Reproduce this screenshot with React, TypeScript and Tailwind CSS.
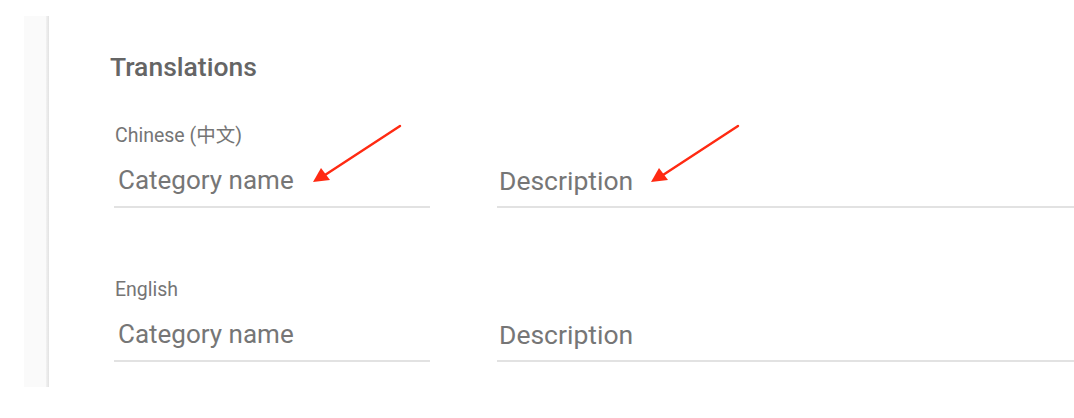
import React from "react";

function Arrow({ className }: { className: string }) {
  return (
    <svg className={className} width="92" height="62" viewBox="0 0 92 62" fill="none">
      <line x1="89" y1="2" x2="14" y2="51" stroke="#ff2a12" strokeWidth="2.4" strokeLinecap="round" />
      <polygon points="2,58 10,44 19,56" fill="#ff2a12" />
    </svg>
  );
}

function Field({
  label,
  placeholder,
  className,
  desc,
}: {
  label?: string;
  placeholder: string;
  className: string;
  desc?: boolean;
}) {
  return (
    <div className={className}>
      <div className="h-[24px] pl-[1px] text-[19.5px] leading-[24px] text-[#757575]">{label}</div>
      <div
        className={
          desc
            ? "mt-[16px] border-b-2 border-[#e2e2e2] pb-[8px] pl-[2px] text-[26.5px] leading-[34px] text-[#767676]"
            : "mt-[15px] border-b-2 border-[#e2e2e2] pb-[9px] pl-[4px] text-[26px] leading-[34px] text-[#767676]"
        }
      >
        {placeholder}
      </div>
    </div>
  );
}

export default function App() {
  return (
    <div
      className="w-[1074px] h-[418px] bg-white pt-[16px] pl-[24px]"
      style={{ fontFamily: "Roboto, 'Noto Sans CJK SC', sans-serif" }}
    >
      <div className="flex h-[371px]">
        <div className="w-[22px] bg-[#fafafa]" />
        <div className="w-[3px] bg-gradient-to-r from-[#f2f2f2] to-[#e2e2e2]" />
        <div className="relative flex-1 bg-white pl-[65px] pt-[35px]">
          <h2 className="-ml-[4px] text-[26.5px] leading-[32px] font-medium text-[#656565]">Translations</h2>
          <div className="mt-[41px] flex">
            <Field label="Chinese (中文)" placeholder="Category name" className="w-[316px]" />
            <Field placeholder="Description" className="ml-[67px] flex-1" desc />
          </div>
          <div className="mt-[70px] flex">
            <Field label="English" placeholder="Category name" className="w-[316px]" />
            <Field placeholder="Description" className="ml-[67px] flex-1" desc />
          </div>
          <Arrow className="absolute left-[262px] top-[108px]" />
          <Arrow className="absolute left-[600px] top-[108px]" />
        </div>
      </div>
    </div>
  );
}
